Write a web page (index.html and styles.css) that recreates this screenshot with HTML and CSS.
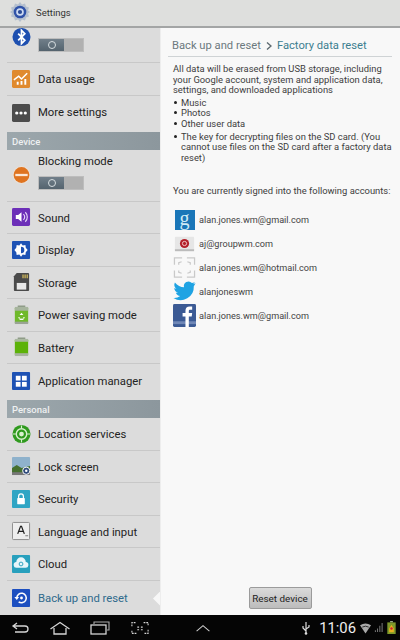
FILE: index.html
```html
<!DOCTYPE html>
<html lang="en">
<head>
<meta charset="utf-8">
<title>Settings</title>
<link rel="stylesheet" href="styles.css">
</head>
<body>
<div class="screen">
  <header class="topbar">
    <svg class="app-icon" viewBox="0 0 20 20"><path d="M10 0l2 2.500 3-1 1 3 3 1-1 3 2 1.500-2 1.500 1 3-3 1-1 3-3-1-2 2.500-2-2.500-3 1-1-3-3-1 1-3-2-1.500 2-1.500-1-3 3-1 1-3 3 1z" fill="#b4bfce"/><circle cx="10" cy="10" r="6.300" fill="#2f52a8"/><circle cx="10" cy="10" r="3.800" fill="#cfdcf2"/><circle cx="10" cy="10" r="2.100" fill="#2a4a97"/></svg>
    <span class="topbar-title">Settings</span>
  </header>
  <main class="panes">
    <nav class="side">
      <div class="row row-bt">
        <svg class="icon icon-bt" viewBox="0 0 20 20"><circle cx="10" cy="10" r="9.500" fill="#1d4fb0"/><path d="M6.500 6.500l7 7-3.500 3.500V3l3.500 3.500-7 7" fill="none" stroke="#fff" stroke-width="1.800"/></svg>
        <div class="toggle toggle-bt"><span class="toggle-on"><i></i></span></div>
      </div>
      <div class="row"><svg class="icon" viewBox="0 0 20 20"><rect width="19" height="19" y=".5" rx="1.500" fill="#e08a2e"/><path d="M2 11l5-4 3 3 6-6" fill="none" stroke="#fff" stroke-width="1.600"/><path d="M5 16v-3h2v3zM9 16v-4h2v4zM13 16v-6h2v6z" fill="#fff"/></svg><span>Data usage</span></div>
      <div class="row row-last"><svg class="icon" viewBox="0 0 20 20"><rect width="19" height="19" y=".5" rx="1.500" fill="#4c4c4c"/><circle cx="5" cy="10" r="1.700" fill="#fff"/><circle cx="9.500" cy="10" r="1.700" fill="#fff"/><circle cx="14" cy="10" r="1.700" fill="#fff"/></svg><span>More settings</span></div>
      <div class="section">Device</div>
      <div class="row row-blocking">
        <svg class="icon" viewBox="0 0 20 20"><circle cx="10" cy="10" r="9.500" fill="#e9e0d8"/><circle cx="10" cy="10" r="8.300" fill="#df7420"/><rect x="3.500" y="8.800" width="13" height="2.400" fill="#fbe8d8"/></svg>
        <div class="blocking-body"><span>Blocking mode</span><div class="toggle"><span class="toggle-on"><i></i></span></div></div>
      </div>
      <div class="row"><svg class="icon" viewBox="0 0 20 20"><rect width="19" height="19" y=".5" rx="1.500" fill="#6c2fb8"/><path d="M4 8h2.500L10 5v10l-3.500-3H4z" fill="#fff"/><path d="M12 7a4 4 0 0 1 0 6M14 5a7 7 0 0 1 0 10" fill="none" stroke="#e5d6f7" stroke-width="1.200"/></svg><span>Sound</span></div>
      <div class="row"><svg class="icon" viewBox="0 0 20 20"><rect width="19" height="19" y=".5" rx="1" fill="#1e52b4"/><path d="M9.500 3l1.800 2.200 2.800-.4.4 2.800L16.500 10l-2 2.400-.4 2.800-2.800-.4L9.500 17l-1.800-2.200-2.800.4-.4-2.800L2.500 10l2-2.400.4-2.800 2.800.4z" fill="#fff"/><path d="M9.500 6.500a3.500 3.500 0 0 1 0 7z" fill="#1e52b4"/></svg><span>Display</span></div>
      <div class="row"><svg class="icon" viewBox="0 0 20 20"><path d="M5 .5h12a1 1 0 0 1 1 1v17a1 1 0 0 1-1 1H3a1 1 0 0 1-1-1V4z" fill="#4a4a4a"/><path d="M11 2h1.200v4H11zM13.200 2h1.200v4h-1.200zM15.400 2h1.200v4h-1.200z" fill="#e2c860"/><rect x="5" y="11" width="10" height="7" fill="#e8e8e8"/></svg><span>Storage</span></div>
      <div class="row"><svg class="icon" viewBox="0 0 20 20"><rect x="6" y="0" width="8" height="2" fill="#8d9a86"/><rect x="3" y="1.500" width="14" height="18" rx="1.500" fill="#6fb92a"/><rect x="3" y="1.500" width="14" height="4" fill="#a7b59e"/><rect x="3" y="17" width="14" height="2.500" fill="#9aa494"/><path d="M10 7.500l2 2.500h-4zM6.500 12l2 .5-1 2zM13.500 12l-2 .5 1 2z" fill="#fff"/><path d="M8 14.500h4" stroke="#fff" stroke-width="1.400"/></svg><span>Power saving mode</span></div>
      <div class="row"><svg class="icon" viewBox="0 0 20 20"><rect x="6" y="0" width="8" height="2" fill="#8d9a86"/><rect x="3" y="1.500" width="14" height="18" rx="1.500" fill="#5cb208"/><rect x="3" y="1.500" width="14" height="3" fill="#aab8a0"/><rect x="3" y="16.500" width="14" height="3" fill="#a7b2a0"/></svg><span>Battery</span></div>
      <div class="row row-last"><svg class="icon" viewBox="0 0 20 20"><rect width="19" height="19" y=".5" rx="1" fill="#1e52b4"/><rect x="4" y="4.500" width="5" height="5" fill="#fff"/><rect x="10.500" y="4.500" width="5" height="5" fill="#fff"/><rect x="4" y="11" width="5" height="5" fill="#fff"/><rect x="10.500" y="11" width="5" height="5" fill="#fff"/></svg><span>Application manager</span></div>
      <div class="section">Personal</div>
      <div class="row"><svg class="icon" viewBox="0 0 20 20"><circle cx="10" cy="10" r="9.500" fill="#2f9a1e"/><circle cx="10" cy="10" r="5.500" fill="none" stroke="#d9f0cf" stroke-width="1.500"/><circle cx="10" cy="10" r="2.500" fill="#d9f0cf"/><path d="M10 1v3M10 16v3M1 10h3M16 10h3" stroke="#d9f0cf" stroke-width="1.200"/></svg><span>Location services</span></div>
      <div class="row"><svg class="icon" viewBox="0 0 20 20"><rect width="19" height="19" y=".5" rx="1" fill="#8fb2cc"/><path d="M0 12l5-3 5 3 9-2v9.500H0z" fill="#45702f"/><rect y="16.500" width="19" height="3" fill="#777"/><circle cx="15" cy="15" r="3.800" fill="#2f4a7a" stroke="#fff"/><circle cx="15" cy="15" r="1.300" fill="#fff"/></svg><span>Lock screen</span></div>
      <div class="row"><svg class="icon" viewBox="0 0 20 20"><rect width="19" height="19" y=".5" rx="1" fill="#2fa5c4"/><rect x="5.500" y="9" width="8" height="6.500" rx=".5" fill="#fff"/><path d="M7 9V7a2.500 2.500 0 0 1 5 0v2" fill="none" stroke="#fff" stroke-width="1.300"/></svg><span>Security</span></div>
      <div class="row"><svg class="icon" viewBox="0 0 20 20"><rect x=".5" y="1" width="18" height="18" rx="1" fill="#eee" stroke="#8b8b8b"/><path d="M6 13l3-8h1l3 8M7.300 10.500h4.400" fill="none" stroke="#222" stroke-width="1.300"/><path d="M14 15h3" stroke="#777"/></svg><span>Language and input</span></div>
      <div class="row"><svg class="icon" viewBox="0 0 20 20"><rect width="19" height="19" y=".5" rx="1" fill="#28a0bd"/><path d="M5 14a3 3 0 0 1-.5-6 5 5 0 0 1 10 0 3 3 0 0 1-.5 6z" fill="#e8f6fa"/><circle cx="9.500" cy="10" r="2" fill="none" stroke="#28a0bd"/></svg><span>Cloud</span></div>
      <div class="row row-active"><svg class="icon" viewBox="0 0 20 20"><rect width="19" height="19" y=".5" rx="1" fill="#1c4fc0"/><path d="M5 10a5 5 0 1 1 2 4" fill="none" stroke="#fff" stroke-width="1.600"/><path d="M2.500 9h5l-2.500 3z" fill="#fff"/><circle cx="10" cy="10" r="1.500" fill="#fff"/></svg><span>Back up and reset</span><b class="pointer"></b></div>
    </nav>
    <section class="detail">
      <div class="crumbs"><span>Back up and reset</span><svg class="chev" viewBox="0 0 6 8"><path d="M1 .5L5 4 1 7.500" fill="none" stroke="#5d6a70" stroke-width="1.400"/></svg><strong>Factory data reset</strong></div>
      <div class="detail-body">
        <p>All data will be erased from USB storage, including your Google account, system and application data, settings, and downloaded applications</p>
        <ul>
          <li>Music</li>
          <li>Photos</li>
          <li>Other user data</li>
          <li class="li-gap">The key for decrypting files on the SD card. (You cannot use files on the SD card after a factory data reset)</li>
        </ul>
        <p class="signed">You are currently signed into the following accounts:</p>
        <div class="accounts">
          <div class="account"><div class="g-icon">g</div><span>alan.jones.wm@gmail.com</span></div>
          <div class="account"><svg class="acc-icon" viewBox="0 0 24 24"><rect x="2" y="5" width="20" height="15" rx="1" fill="#e6e6e6"/><rect x="2" y="18" width="20" height="2" fill="#bbb"/><circle cx="12" cy="12" r="4.800" fill="#b3202a"/><circle cx="12" cy="12" r="2.200" fill="none" stroke="#f1c8c8"/></svg><span>aj@groupwm.com</span></div>
          <div class="account"><svg class="acc-icon" viewBox="0 0 24 24"><path d="M1.500 9V2h8M14.500 2h8v7M22.500 15v7h-8M9.500 22h-8v-7M6 9V7l3-1M18 9V7l-3-1M18 15v2l-3 1M6 15v2l3 1" fill="none" stroke="#c9c9c9" stroke-width="1.300"/></svg><span>alan.jones.wm@hotmail.com</span></div>
          <div class="account"><svg class="acc-icon" viewBox="0 0 24 24"><path d="M23.500 3.500c-.8.500-1.800.9-2.800 1 1-.6 1.700-1.500 2-2.500-1 .6-2 1-3 1.200a4.800 4.800 0 0 0-8.200 4.400C8 7.300 4.500 5.400 2 2.500 .7 4.800 1.400 7.600 3.500 9c-.8 0-1.500-.2-2.200-.6 0 2.300 1.700 4.300 3.900 4.800-.7.2-1.400.2-2.200.1.600 1.900 2.400 3.300 4.500 3.300A9.800 9.800 0 0 1 .5 18.700 13.800 13.800 0 0 0 21.700 6.400c.7-.7 1.300-1.800 1.800-2.900z" fill="#1fa3e3"/></svg><span>alanjoneswm</span></div>
          <div class="account"><svg class="acc-icon" viewBox="0 0 24 24"><rect x="0" y="0" width="24" height="24" rx="1.500" fill="#3b5a94"/><rect x="0" y="18" width="24" height="3" fill="#6f87b6"/><path d="M13 24V13h-3V9.500h3V7c0-3 1.500-4.500 4.500-4.500H20V6h-1.800c-1.200 0-1.700.5-1.700 1.500v2H20l-.5 3.500h-3v11z" fill="#fff"/></svg><span>alan.jones.wm@gmail.com</span></div>
        </div>
      </div>
      <div class="actions"><button class="reset" type="button">Reset device</button></div>
    </section>
  </main>
  <footer class="navbar">
    <div class="nav-buttons">
      <svg class="nav-icon nav-back" viewBox="0 0 20 14"><path d="M6 2L2 5l4 3M2 5h12a3 3 0 0 1 0 6H4" fill="none" stroke="#d5d5d5" stroke-width="1.300"/></svg>
      <svg class="nav-icon" viewBox="0 0 20 14"><path d="M.5 8L10 1.500 19.500 8M4 7v6h12V7" fill="none" stroke="#d5d5d5" stroke-width="1.300"/></svg>
      <svg class="nav-icon" viewBox="0 0 20 14"><path d="M4 3V1h15v8h-2" fill="none" stroke="#aaa" stroke-width="1.100"/><rect x="1" y="4" width="15" height="9" fill="none" stroke="#d5d5d5" stroke-width="1.300"/></svg>
      <svg class="nav-icon nav-shot" viewBox="0 0 20 14"><path d="M1 5V1h5M14 1h5v4M19 9v4h-5M6 13H1V9M7 6h2M11 6h2M7 9h2M11 9h2" fill="none" stroke="#d5d5d5" stroke-width="1.200" stroke-dasharray="2 1"/></svg>
      <svg class="nav-icon nav-up" viewBox="0 0 20 14"><path d="M2 11l8-7 8 7" fill="none" stroke="#ccc" stroke-width="1.300"/></svg>
    </div>
    <div class="status">
      <svg class="st-usb" viewBox="0 0 10 14"><path d="M5 1v12M5 10L2 7V5M5 8l3-2V4" fill="none" stroke="#ddd" stroke-width="1.200"/><circle cx="5" cy="12.500" r="1.300" fill="#ddd"/></svg>
      <span class="clock">11:06</span>
      <svg class="st-wifi" viewBox="0 0 12 12"><path d="M0 3q6-4 12 0L6 12z" fill="#aaa"/><path d="M2.500 5q3.500-2 7 0" stroke="#222" fill="none"/></svg>
      <svg class="st-signal" viewBox="0 0 10 10"><path d="M1 10V8h1v2zM3.500 10V6h1v4zM6 10V3h1v7zM8.500 10V0h1v10z" fill="#888"/></svg>
      <svg class="st-batt" viewBox="0 0 9 14"><rect x="3" y="0" width="3" height="1.500" fill="#9a8"/><rect x="0" y="1.500" width="9" height="12.500" fill="#7f9a2a"/><path d="M2 8l2.500-4L7 8v4H2z" fill="#e8b020"/><circle cx="4.500" cy="8" r="1.300" fill="#c23"/></svg>
    </div>
  </footer>
</div>
</body>
</html>
```
FILE: styles.css
```css
* { box-sizing: border-box; }
html, body { margin: 0; padding: 0; }
body { width: 400px; height: 640px; overflow: hidden; font-family: Roboto, "Liberation Sans", sans-serif; background: #000; }
.screen { width: 400px; height: 640px; display: flex; flex-direction: column; }

.topbar { height: 28px; flex: none; display: flex; align-items: center; gap: 6px; padding: 0 0 0 10px; background: #dedfdd; border-bottom: 2px solid #a3a5a5; }
.app-icon { width: 20px; height: 20px; margin-top: -3px; }
.topbar-title { font-size: 9.5px; color: #333; margin-top: -1px; }

.panes { flex: 1; display: flex; min-height: 0; }
.side { width: 160px; flex: none; padding-left: 7px; background: #dcdcdc; overflow: hidden; }
.row { height: 32.5px; display: flex; align-items: center; gap: 7px; padding-left: 5px; font-size: 11.3px; color: #232323; border-bottom: 1px solid #c8c8c8; position: relative; }
.row > span { margin-top: 2px; }
.row-last { border-bottom: 0; height: 36px; padding-bottom: 2px; }
.row-last > span { margin-top: 0; }
.row:last-child { border-bottom: 0; height: 35px; }
.row:last-child > span { margin-top: 0; }
.icon { width: 19px; height: 20px; flex: none; }

.row-bt { height: 35px; align-items: flex-start; }
.icon-bt { margin-top: -1px; }
.toggle { width: 46px; height: 14px; background: #b1b1b1; border: 1px solid #bdbdbd; }
.toggle-bt { margin-top: 10px; }
.toggle-on { display: flex; align-items: center; justify-content: center; width: 25px; height: 100%; background: linear-gradient(#717f8a, #54636e); }
.toggle-on i { width: 8px; height: 8px; border: 1px solid #d6dde0; border-radius: 50%; }

.section { height: 18px; padding: 1px 0 0 5px; display: flex; align-items: center; font-size: 9.5px; font-weight: 500; color: #eef0f1; background: linear-gradient(90deg, #9ca7ac, #8c979d); }

.row-blocking { height: 52px; }
.blocking-body { display: flex; flex-direction: column; gap: 8px; margin-top: -5px; }

.row-active { color: #2f6a8c; }
.pointer { position: absolute; right: 0; top: 11px; width: 7px; height: 14px; background: #f7f7f7; clip-path: polygon(100% 0, 100% 100%, 0 50%); }

.detail { flex: 1; display: flex; flex-direction: column; background: #f8f8f8; border-left: 1px solid #ededed; padding: 0 8px 6px 7px; min-width: 0; }
.crumbs { height: 29px; flex: none; display: flex; align-items: center; padding: 7px 0 0 4px; font-size: 11.2px; color: #6c797e; border-bottom: 1px solid #cfd3d5; }
.chev { width: 6px; height: 8px; margin: 0 5px 0 5px; }
.crumbs strong { font-weight: 400; color: #3c7e90; }
.detail-body { flex: 1; padding: 7px 0 0 5px; font-size: 9.4px; line-height: 10.6px; color: #3d3d3d; }
p { margin: 0; }
ul { margin: 2px 0 0; padding: 0 0 0 8px; list-style: none; }
li { position: relative; }
li::before { content: ""; position: absolute; left: -7px; top: 3px; width: 3px; height: 3px; border-radius: 50%; background: #222; }
.li-gap { margin-top: 2px; }
.signed { margin-top: 23px; }

.accounts { margin-top: 11px; display: flex; flex-direction: column; }
.account { height: 24px; display: flex; align-items: center; gap: 3px; color: #444; font-size: 9.15px; }
.acc-icon { width: 23px; height: 23px; flex: none; }
.g-icon { width: 20px; height: 20px; margin: 0 1.5px; flex: none; display: flex; justify-content: center; font: 20px/16px "Liberation Serif", serif; color: #cfeaf5; background: #1a76b8; }

.actions { flex: none; display: flex; justify-content: center; }
.reset { width: 63px; height: 22px; padding: 0; background: linear-gradient(#dadada, #bcbcbc); border: 1px solid #9b9b9b; border-radius: 2px; font: 9.9px Roboto, "Liberation Sans", sans-serif; color: #222; }

.navbar { height: 25px; flex: none; display: flex; justify-content: space-between; align-items: center; background: #050505; padding: 0 4px 0 11px; }
.nav-buttons { display: flex; gap: 20px; }
.nav-icon { width: 20px; height: 14px; }
.nav-back { margin-right: -1px; }
.nav-shot { width: 18px; margin-left: 1px; }
.nav-up { width: 16px; margin-left: 26px; }
.status { display: flex; align-items: center; gap: 3px; }
.st-usb { width: 10px; height: 14px; margin-right: 5px; }
.clock { font-size: 14.8px; color: #eee; margin-right: 1px; }
.st-wifi { width: 11px; height: 12px; }
.st-signal { width: 9px; height: 9px; }
.st-batt { width: 9px; height: 13px; margin-left: 1px; }
```
